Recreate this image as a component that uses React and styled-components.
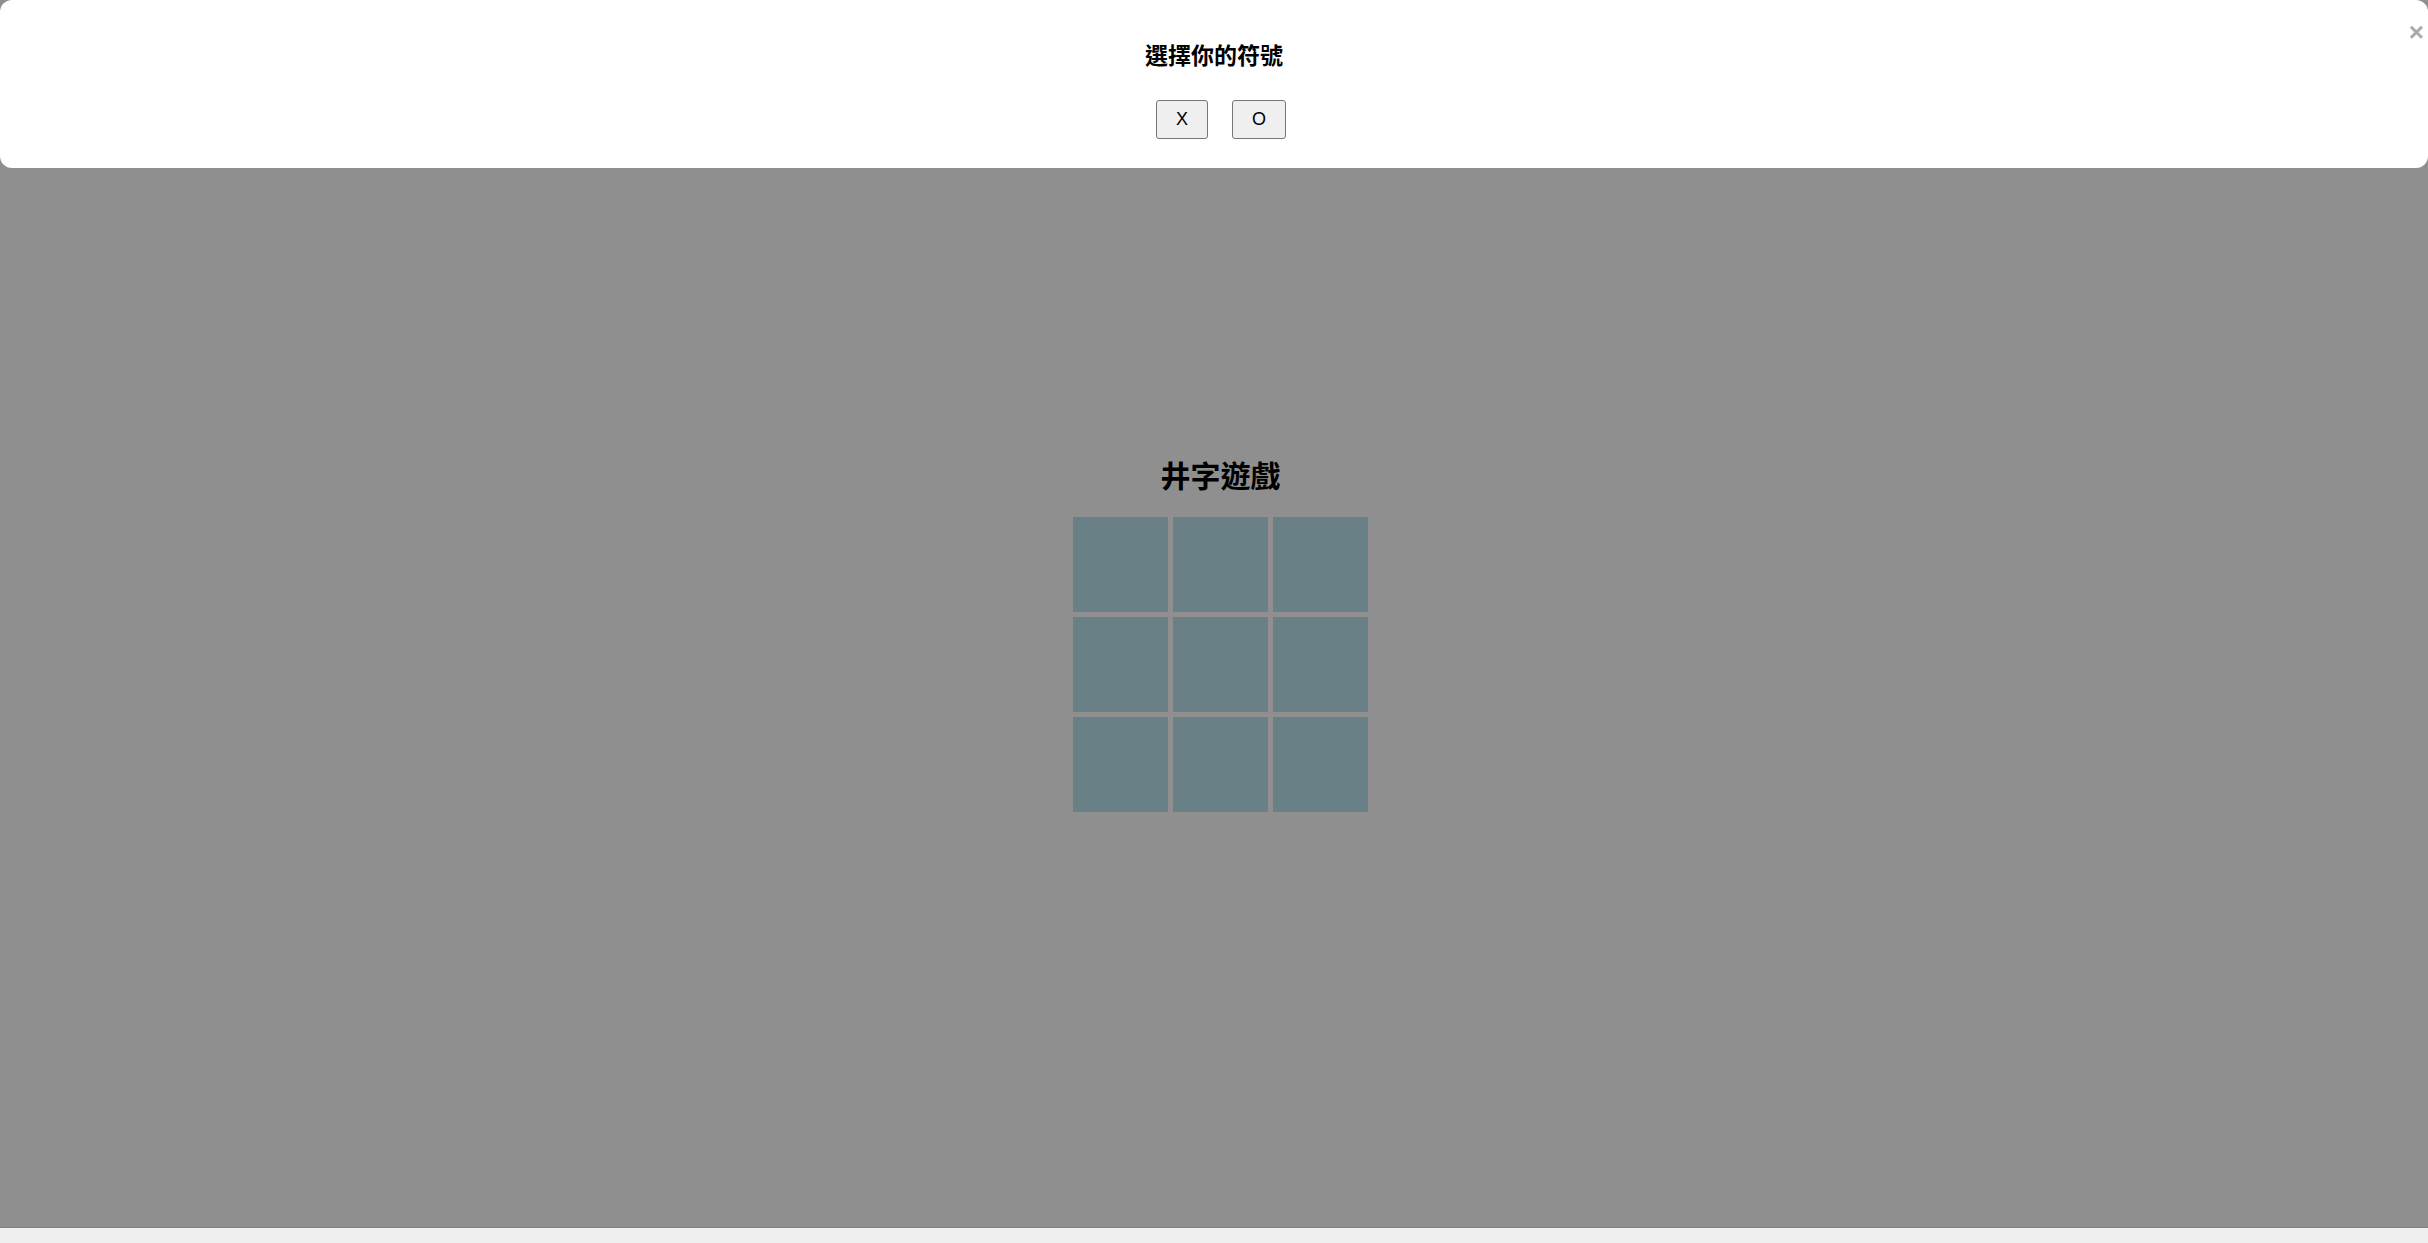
import React, { useState } from 'react';
import styled, { createGlobalStyle } from 'styled-components';

const Global = createGlobalStyle`
  html, body {
    margin: 0;
    padding: 0;
    overflow: hidden;
    background: #efefef;
    font-family: 'Liberation Sans', 'Noto Sans CJK TC', sans-serif;
  }
`;

const Page = styled.div`
  height: 100vh;
  display: flex;
  flex-direction: column;
`;

const Stage = styled.main`
  position: relative;
  flex: 1;
  background: #fff;
  display: flex;
  flex-direction: column;
  align-items: center;
  justify-content: center;
  padding: 36px 0 0 13px;
  box-sizing: border-box;
`;

const Title = styled.h1`
  margin: 0 0 20px;
  font-family: 'Noto Sans CJK TC', sans-serif;
  font-size: 30px;
  line-height: 46px;
  font-weight: 700;
  color: #000;
`;

const Board = styled.div`
  display: grid;
  grid-template-columns: repeat(3, 95px);
  grid-auto-rows: 95px;
  gap: 5px;
`;

const Cell = styled.button`
  border: none;
  padding: 0;
  background: rgb(187, 229, 240);
  font-size: 48px;
  font-family: 'Liberation Sans', sans-serif;
  cursor: pointer;
`;

const Overlay = styled.div`
  position: absolute;
  inset: 0;
  background: rgba(0, 0, 0, 0.44);
`;

const Modal = styled.div`
  position: absolute;
  top: 0;
  left: 0;
  right: 0;
  background: #fff;
  border-radius: 12px;
  padding: 37px 20px 29px;
  display: flex;
  flex-direction: column;
  align-items: center;
`;

const ModalTitle = styled.h2`
  margin: 0 0 28px;
  font-family: 'Noto Sans CJK TC', sans-serif;
  font-size: 23px;
  line-height: 35px;
  font-weight: 700;
  color: #000;
`;

const Choices = styled.div`
  display: flex;
  gap: 24px;
  padding-left: 14px;
`;

const Choice = styled.button`
  height: 39px;
  padding: 0 19px;
  font-family: 'Liberation Sans', sans-serif;
  font-size: 18px;
  color: #000;
  background: #efefef;
  border: 1px solid #767676;
  border-radius: 3px;
  cursor: pointer;
`;

const Close = styled.span`
  position: absolute;
  top: 17px;
  right: 4px;
  font-family: 'Liberation Sans', sans-serif;
  font-size: 26px;
  line-height: 30px;
  font-weight: 700;
  color: #aaa;
  cursor: pointer;
`;

const ScrollStrip = styled.div`
  height: 15px;
  flex-shrink: 0;
  background: #efefef;
  border-top: 1px solid #7e7e7e;
`;

export default function App() {
  const [cells, setCells] = useState(Array(9).fill(''));
  const [symbol, setSymbol] = useState(null);
  const [open, setOpen] = useState(true);

  function play(i) {
    if (!symbol || cells[i]) return;
    setCells(prev => prev.map((c, k) => (k === i ? symbol : c)));
  }

  function pick(s) {
    setSymbol(s);
    setOpen(false);
  }

  return (
    <Page>
      <Global />
      <Stage>
        <Title>井字遊戲</Title>
        <Board>
          {cells.map((c, i) => (
            <Cell key={i} onClick={() => play(i)}>{c}</Cell>
          ))}
        </Board>
        {open && (
          <Overlay>
            <Modal>
              <Close onClick={() => setOpen(false)}>×</Close>
              <ModalTitle>選擇你的符號</ModalTitle>
              <Choices>
                <Choice onClick={() => pick('X')}>X</Choice>
                <Choice onClick={() => pick('O')}>O</Choice>
              </Choices>
            </Modal>
          </Overlay>
        )}
      </Stage>
      <ScrollStrip />
    </Page>
  );
}
